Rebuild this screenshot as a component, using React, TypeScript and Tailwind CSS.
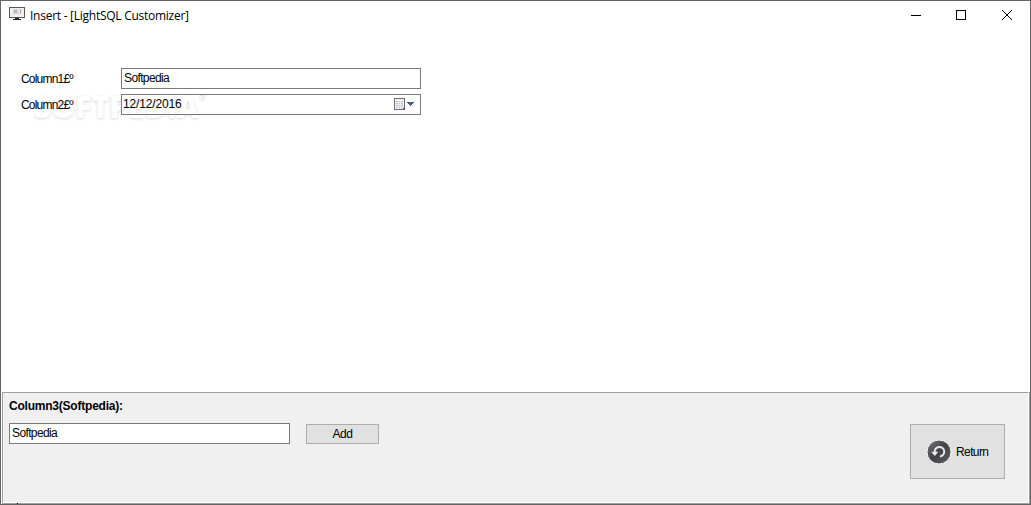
import React from "react";
import clsx from "clsx";

const TextBox = ({
  value,
  className,
  children,
}: {
  value: string;
  className?: string;
  children?: React.ReactNode;
}) => {
  return (
    <div
      className={clsx(
        "flex h-[21px] items-center justify-between border border-[#7a7a7a] pb-px",
        children ? "pl-px" : "pl-[2px]",
        className
      )}
    >
      {children ? (
        <span className="tracking-[-0.15px]">{value}</span>
      ) : (
        <span className="tracking-[-0.62px]">{value}</span>
      )}
      {children}
    </div>
  );
};

const MonitorIcon = () => (
  <svg width="16" height="14" viewBox="0 0 16 14" shapeRendering="crispEdges">
    <rect x="0.5" y="0.5" width="15" height="10" fill="#eef0f2" stroke="#5a5656" />
    <rect x="4" y="2" width="8" height="5" fill="#d3d8e0" />
    <rect x="5" y="3" width="3" height="3" fill="#cbb0b4" />
    <rect x="9" y="3" width="2" height="3" fill="#e9f0f5" />
    <rect x="11" y="3" width="1" height="3" fill="#c08c90" />
    <rect x="6" y="11" width="4" height="1" fill="#222" />
    <rect x="4" y="12" width="8" height="1" fill="#222" />
  </svg>
);

const CalendarIcon = () => (
  <svg width="12" height="13" viewBox="0 0 12 13" shapeRendering="crispEdges">
    <rect x="0.5" y="0.5" width="10" height="11" fill="#f3f3f6" stroke="#77666a" />
    <rect x="2" y="3" width="7" height="7" fill="#b9c3d6" />
    <path d="M2 4.5h7M2 6.5h7M2 8.5h7M4.5 3v7M6.5 3v7" stroke="#e6eaf2" />
    <path d="M8 11h3v-3z" fill="#5e4d52" />
  </svg>
);

const ReturnIcon = () => (
  <svg width="26" height="26" viewBox="0 0 26 26">
    <defs>
      <linearGradient id="disc" x1="0" y1="0" x2="1" y2="1">
        <stop offset="0" stopColor="#77777a" />
        <stop offset="0.5" stopColor="#434345" />
        <stop offset="1" stopColor="#606063" />
      </linearGradient>
    </defs>
    <circle cx="13" cy="13" r="12" fill="url(#disc)" stroke="#f5f5f5" />
    <path
      d="M8.7 13.5a4.8 4.8 0 1 1 5.3 4"
      fill="none"
      stroke="#e6e6e6"
      strokeWidth="2"
    />
    <path d="M5.2 12.8h7l-3.3 4.2z" fill="#eeeeee" />
  </svg>
);

const App = () => {
  return (
    <div className="relative flex h-[505px] w-[1031px] flex-col overflow-hidden border border-[#646464] bg-white font-['Liberation_Sans',sans-serif] text-[12px] leading-[14px] text-black">
      {/* watermark behind the form */}
      <div className="pointer-events-none absolute top-[88px] left-[33px] font-['Open_Sans',sans-serif] text-[30px] leading-[36px] font-extrabold text-white [text-shadow:0_1px_3px_rgba(0,0,0,0.16)]">
        SOFTPEDIA
        <span className="absolute top-[-9px] left-full text-[9px] font-normal text-[#dedede] [text-shadow:none]">
          ®
        </span>
      </div>

      <header className="relative flex h-[29px] shrink-0 items-center justify-between pl-2">
        <div className="flex items-center gap-[5px]">
          <span className="-mt-[3px]">
            <MonitorIcon />
          </span>
          <h1 className="font-['Open_Sans',sans-serif] text-[12px] leading-4 tracking-[-0.26px]">
            Insert - [LightSQL Customizer]
          </h1>
        </div>
        <div className="flex items-center gap-[35px] pr-[17px]">
          <svg width="11" height="11" viewBox="0 0 11 11">
            <path d="M1 5.5h10" stroke="#000" />
          </svg>
          <svg width="11" height="11" viewBox="0 0 11 11">
            <rect x="0.5" y="0.5" width="9" height="9" fill="none" stroke="#000" />
          </svg>
          <svg width="11" height="11" viewBox="0 0 11 11">
            <path d="M0 0l10 10M10 0l-10 10" stroke="#000" />
          </svg>
        </div>
      </header>

      <main className="relative flex flex-1 flex-col gap-[5px] pt-[38px] pl-5">
        <div className="flex items-center">
          <span className="w-[100px] tracking-[-0.8px]">Column1£º</span>
          <TextBox value="Softpedia" className="w-[300px]" />
        </div>
        <div className="flex items-center">
          <span className="w-[100px] tracking-[-0.8px]">Column2£º</span>
          <TextBox value="12/12/2016" className="w-[300px]">
            <span className="flex items-center gap-px pr-[6px]">
              <CalendarIcon />
              <svg width="7" height="4" viewBox="0 0 7 4" shapeRendering="crispEdges">
                <path d="M0 0h7v1h-1v1h-1v1h-1v1h-1v-1h-1v-1h-1v-1h-1z" fill="#435a85" />
              </svg>
            </span>
          </TextBox>
        </div>
      </main>

      <footer className="relative ml-px flex h-[112px] shrink-0 border-r border-b border-[#a0a0a0]">
        <div className="flex flex-1 justify-between border border-t-[#a0a0a0] border-r-white border-b-white border-l-[#a0a0a0] bg-[#f0f0f0]">
          <div className="pt-[6px] pl-[6px]">
            <h2 className="font-bold tracking-[-0.22px]">Column3(Softpedia):</h2>
            <div className="mt-[10px] flex items-end gap-4">
              <TextBox value="Softpedia" className="w-[281px] bg-white" />
              <button className="h-5 w-[73px] border border-[#adadad] bg-[#e1e1e1] tracking-[-0.4px]">
                Add
              </button>
            </div>
          </div>
          <button className="mt-[31px] mr-[23px] flex h-[55px] w-[95px] items-center gap-1 border border-[#adadad] bg-[#e1e1e1] pl-[15px]">
            <ReturnIcon />
            <span className="tracking-[-0.6px]">Return</span>
          </button>
        </div>
        <i className="absolute -bottom-px left-[15px] size-px bg-black" />
      </footer>
    </div>
  );
};

export default App;
